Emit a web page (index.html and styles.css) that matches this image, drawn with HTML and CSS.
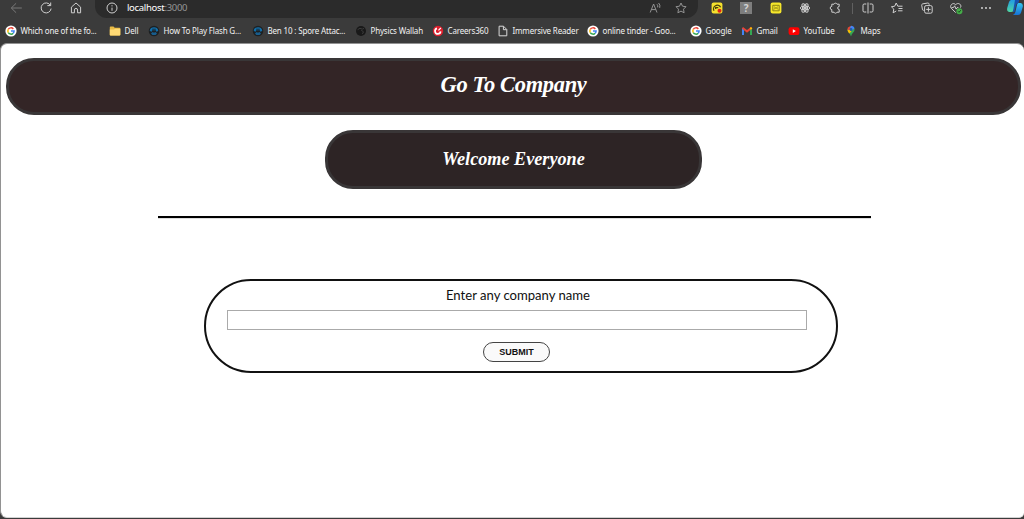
FILE: index.html
```html
<!DOCTYPE html>
<html lang="en">

<head>
  <meta charset="UTF-8" />
  <meta name="viewport" content="width=device-width, initial-scale=1.0" />
  <title>Go To Company</title>
  <link rel="stylesheet" href="styles.css">
</head>

<body>
  <!-- shared shapes -->
  <svg class="defs" width="0" height="0">
    <symbol id="google" viewBox="0 0 12 12">
      <circle cx="6" cy="6" r="5.6" fill="#fff" />
      <g fill="none" stroke-width="1.5">
        <path d="M3.3 4.4A3.1 3.1 0 0 1 8.3 3.9" stroke="#ea4335" />
        <path d="M3.3 7.6A3.1 3.1 0 0 1 3.3 4.4" stroke="#fbbc05" />
        <path d="M8.2 8.2A3.1 3.1 0 0 1 3.3 7.6" stroke="#34a853" />
        <path d="M6 6.1H9.1A3.1 3.1 0 0 1 8.2 8.2" stroke="#4285f4" />
      </g>
    </symbol>
    <symbol id="omnitrix" viewBox="0 0 12 12">
      <circle cx="6" cy="6" r="5.3" fill="#1d2022" />
      <path d="M1.7 5.6C2 1 10 1 10.3 5.6L8.7 7 7.8 5.2H4.2L3.3 7z" fill="#126fab" />
      <path d="M3 8.5 4.6 6.9 6 7.7 7.4 6.9 9 8.5 7.6 9.9H4.4z" fill="#175d8d" />
      <path d="M4.2 4.2H7.8" stroke="#172a36" />
    </symbol>
  </svg>

  <header class="browser">
    <div class="toolbar">
      <div class="nav">
        <svg viewBox="0 0 14 14" class="dim"><path d="M12.8 7H2.3M7.1 2.3 2.3 7 7.1 11.7" /></svg>
        <svg viewBox="0 0 14 14"><path d="M11.4 4.3A5 5 0 1 0 12.1 7.6M11.7 1.5V4.6H8.4" /></svg>
        <svg viewBox="0 0 14 14"><path d="M2.4 6.1 7 2 11.6 6.1V11.8H8.6V9A1.6 1.6 0 0 0 5.4 9V11.8H2.4Z" /></svg>
      </div>
      <div class="address">
        <svg viewBox="0 0 14 14"><circle cx="7" cy="7" r="5" /><path d="M7 6.6V9.8M7 4.2V5.4" /></svg>
        <p class="url">localhost<span>:3000</span></p>
        <svg viewBox="0 0 14 14" class="read"><path d="M2.2 11.5 5.6 3 9 11.5M3.4 8.6H7.8M9 3.3Q10.2 4.6 9.7 6.4M10.6 2Q12.6 4 11.7 6.8" /></svg>
        <svg viewBox="0 0 14 14" class="fav"><path d="M7 2 8.5 5.2 12 5.7 9.5 8.2 10.1 11.8 7 10.1 3.9 11.8 4.5 8.2 2 5.7 5.5 5.2Z" /></svg>
      </div>
      <div class="extensions">
        <svg viewBox="0 0 14 14"><rect x="1.6" y="1.6" width="10.8" height="11" rx="2" fill="#f6e12d" stroke="none" /><path d="M4 9.8A3.5 3.5 0 1 1 10.6 6.2M5.7 8V6.7H8.3" stroke="#4a430c" stroke-width="1.3" /><circle cx="9.5" cy="9.7" r="2" fill="#e12618" stroke="none" /></svg>
        <div class="unknown">?</div>
        <svg viewBox="0 0 14 14"><rect x="1.6" y="1.6" width="10.8" height="11" rx="2" fill="#f6e72b" stroke="none" /><path d="M3.8 4.3H10.2V9.8H3.8ZM5.2 5.8 7 7.3 8.8 5.8M5 8.5 6.2 7.1M9 8.5 7.8 7.1" stroke="#746b12" stroke-width=".8" /></svg>
        <svg viewBox="0 0 14 14"><g stroke-width="1"><ellipse cx="7" cy="7" rx="4.8" ry="2" /><ellipse cx="7" cy="7" rx="4.8" ry="2" transform="rotate(60 7 7)" /><ellipse cx="7" cy="7" rx="4.8" ry="2" transform="rotate(120 7 7)" /></g><circle cx="7" cy="7" r="1" fill="#ddd" /></svg>
        <svg viewBox="0 0 14 14"><path d="M3.8 3.2H6A1.6 1.6 0 0 1 9 3.2H11.2V5.5A1.5 1.5 0 1 0 11.2 8.5V11.2H9A1.6 1.6 0 0 1 6 11.2H3.8V8.6A1.6 1.6 0 0 1 3.8 5.4Z" /></svg>
      </div>
      <div class="divider"></div>
      <div class="tools">
        <svg viewBox="0 0 14 14"><path d="M5.3 3H3.2Q2 3 2 4.2V9.8Q2 11 3.2 11H5.3M8.7 3H10.8Q12 3 12 4.2V9.8Q12 11 10.8 11H8.7M7 1.5V12.5" /></svg>
        <svg viewBox="0 0 14 14"><path d="M7.8 5.2 6.2 2 4.7 5.2 1.4 5.8 3.8 8.1 3.1 11.8 6.2 10M7.8 5.2H12.5M8.5 7.5H12.5M8 9.8H12.5" /></svg>
        <svg viewBox="0 0 14 14"><path d="M3.8 9.4 2.5 8.8 1.7 4.2Q1.6 3.2 2.6 2.9L7.8 2Q8.8 1.9 9 2.9L9.2 3.8" /><rect x="4.6" y="4.6" width="7.6" height="7.6" rx="1.5" /><path d="M8.4 6.2V10.6M6.2 8.4H10.6" /></svg>
        <svg viewBox="0 0 14 14"><path d="M6.7 11.6 2.2 7.2C.2 4.8 3.8 .6 6.7 3.7 9.6 .6 13.2 4.3 11.4 6.6M2.5 6.6H4.5L5.6 4.8 7.1 8.1 8.1 6.6H9.4" /><circle cx="10.4" cy="10.2" r="3" fill="#45ad49" stroke="none" /><path d="M9 10.3 10 11.3 11.8 9.2" stroke="#174b1a" /></svg>
        <svg viewBox="0 0 14 14"><g fill="#e2e2e2" stroke="none"><circle cx="3" cy="7" r=".9" /><circle cx="7" cy="7" r=".9" /><circle cx="11" cy="7" r=".9" /></g></svg>
      </div>
      <svg class="copilot" viewBox="0 0 18 16">
        <defs>
          <linearGradient id="left" x2="0" y2="1"><stop stop-color="#229ce3" /><stop offset="1" stop-color="#4fd7a1" /></linearGradient>
          <linearGradient id="right" x2="0" y2="1"><stop stop-color="#36c6ef" /><stop offset="1" stop-color="#1672d6" /></linearGradient>
        </defs>
        <path d="M5 0H11L7.5 10.5Q6.8 12 5 12H3.2Q.5 11.5 1.2 8L3 2Q3.5 .3 5 0Z" fill="url(#left)" />
        <path d="M12 3H14.5Q17.5 3.5 16.7 7L15 12.8Q14.2 15 12 15H6.8Q8.7 14.6 9.3 12.3L11 5Q11.3 3.5 12 3Z" fill="url(#right)" />
        <path d="M9 0H13.2L12.5 3Q10.6 3 10 5.8L8.4 12H6.9Z" fill="#1752b1" />
      </svg>
    </div>

    <nav class="bookmarks">
      <a><svg><use href="#google" /></svg>Which one of the fo...</a>
      <a><svg viewBox="0 0 12 12"><path d="M.8 2.2Q.8 1.4 1.6 1.4H4.5L5.7 2.7H10.5Q11.3 2.7 11.3 3.5V9.8Q11.3 10.6 10.5 10.6H1.6Q.8 10.6.8 9.8Z" fill="#e9bb45" /><path d="M.8 4.6H5L6.2 3.7H11.3V9.8Q11.3 10.6 10.5 10.6H1.6Q.8 10.6.8 9.8Z" fill="#ffda75" /></svg>Dell</a>
      <a><svg><use href="#omnitrix" /></svg>How To Play Flash G...</a>
      <a><svg><use href="#omnitrix" /></svg>Ben 10 : Spore Attac...</a>
      <a><svg viewBox="0 0 12 12"><circle cx="6" cy="6" r="5" fill="#191919" /><path d="M2.6 4.7 5 3.3 7.3 4.1 9 3.4M6.2 5.2 8.5 6.8 7.4 9" fill="none" stroke="#3c3c3c" /></svg>Physics Wallah</a>
      <a><svg viewBox="0 0 12 12"><circle cx="6" cy="6" r="5.2" fill="#df1f2d" /><path d="M5 3.4A2.8 2.8 0 1 0 8.6 6.4" fill="none" stroke="#fff" stroke-width="1.7" /><path d="M6.4 5.4 8.8 3" stroke="#fff" stroke-width="1.2" /></svg>Careers360</a>
      <a><svg viewBox="0 0 12 12"><path d="M2.1 1.2H6.5L9.8 4.5V10.8H2.1ZM6.4 1.4V4.7H9.6" fill="none" stroke="#d9d9d9" /></svg>Immersive Reader</a>
      <a><svg><use href="#google" /></svg>online tinder - Goo...</a>
      <a><svg><use href="#google" /></svg>Google</a>
      <a><svg viewBox="0 0 12 12" fill="none" stroke-width="2"><path d="M2 3V10" stroke="#4285f4" /><path d="M10 3V10" stroke="#34a853" /><path d="M1.4 2.8 6 6.4 10.6 2.8" stroke="#ea4335" /><path d="M9.2 3.9 10.8 2.7" stroke="#fbbc04" /></svg>Gmail</a>
      <a><svg viewBox="0 0 12 12"><rect x=".6" y="2.2" width="10.8" height="7.8" rx="2" fill="#f00" /><path d="M4.8 4.3V7.9L7.9 6.1Z" fill="#fff" /></svg>YouTube</a>
      <a><svg viewBox="0 0 12 12"><path d="M2.4 4.5A3.7 3.7 0 0 1 9.6 4.5Q9.6 6.2 8 7.8 6.7 9.2 6 11.4 5.3 9.3 3.7 7.6 2.4 6 2.4 4.5Z" fill="#34a853" /><path d="M3.2 2.4Q4.5 .9 6.2 .9L4.6 5.8 2.5 5.3Q2.2 3.8 3.2 2.4Z" fill="#ea4335" /><path d="M6 .8Q8.9 .8 9.5 3.6L7.3 5 5 2.9Z" fill="#4285f4" /><path d="M2.5 5.3 4.6 4.7 6.5 6.3 4.4 8.5Q2.8 7 2.5 5.3Z" fill="#fbbc04" /><circle cx="6" cy="4.5" r="1.4" fill="#2459a9" /></svg>Maps</a>
    </nav>
  </header>

  <main>
    <h1 class="heading">Go To Company</h1>
    <h2 class="welcome">Welcome Everyone</h2>
    <hr>
    <form class="company-form">
      <label for="company">Enter any company name</label>
      <input type="text" id="company">
      <button type="button" id="submit-btn">SUBMIT</button>
    </form>
  </main>
</body>

</html>
```

FILE: styles.css
```css
* {
  margin: 0;
  padding: 0;
  box-sizing: border-box;
}

body {
  height: 519px;
  overflow: hidden;
  background-color: #3b3b3b;
  font-family: "Noto Sans", "Open Sans", sans-serif;
}

.defs {
  display: block;
}

/* Browser bar */
.browser {
  height: 43px;
  color: #f2f2f2;
}

.toolbar {
  height: 18px;
  display: flex;
  align-items: flex-start;
}

.toolbar svg {
  width: 14px;
  height: 14px;
  margin-top: 1px;
  flex-shrink: 0;
  fill: none;
  stroke: #d0d0d0;
  stroke-width: 1;
}

.toolbar .dim {
  stroke: #797979;
}

.nav {
  width: 95px;
  display: flex;
  gap: 16px;
  padding-left: 9px;
}

.address {
  width: 603px;
  height: 18px;
  display: flex;
  padding-left: 10px;
  border-radius: 0 0 12px 12px;
  background-color: #2b2b2b;
}

.url {
  margin-left: 8px;
  font-size: 9.5px;
  letter-spacing: -0.3px;
  line-height: 16px;
  color: #fff;
}

.url span {
  color: #969696;
}

.address .read {
  margin-left: auto;
  stroke: #939393;
}

.address .fav {
  margin: 1px 10px 0 12px;
  stroke: #939393;
}

.extensions {
  display: flex;
  gap: 15.6px;
  margin-left: 12px;
}

.unknown {
  width: 12px;
  height: 12px;
  margin: 2px 1px 0;
  background-color: #7e7e7e;
  color: #d2d2d2;
  font-size: 10px;
  font-weight: bold;
  line-height: 12px;
  text-align: center;
}

.divider {
  width: 1px;
  height: 11px;
  margin: 3px 8px 0 9.6px;
  background-color: #606060;
}

.tools {
  display: flex;
  gap: 15.6px;
}

.toolbar .copilot {
  width: 18px;
  height: 16px;
  margin: 0 0 0 13px;
  stroke: none;
}

.bookmarks {
  height: 25px;
  display: grid;
  grid-template-columns: 104px 39px 104px 103px 77px 65px 90px 103px 51px 47px 57px 60px;
  align-items: center;
  padding-left: 5px;
}

.bookmarks a {
  display: flex;
  align-items: center;
  gap: 3.5px;
  font-size: 8px;
  letter-spacing: -0.17px;
  line-height: 12px;
  white-space: nowrap;
}

.bookmarks svg {
  width: 12px;
  height: 12px;
  flex-shrink: 0;
}

/* Page */
main {
  height: 475px;
  padding: 14px 2px 0 5px;
  overflow: hidden;
  border: 1px solid #929292;
  border-right: none;
  border-bottom-color: #d2d2d2;
  border-radius: 7px 7px 5px 7px;
  background-color: #fff;
}

.heading {
  width: 1015px;
  height: 57px;
  border: 3px solid #393637;
  border-radius: 28px;
  background-color: #332526;
  color: #fff;
  font-family: "Liberation Serif", serif;
  font-size: 22.5px;
  font-style: italic;
  letter-spacing: -0.35px;
  line-height: 48px;
  text-align: center;
}

.welcome {
  width: 377px;
  height: 59px;
  margin: 15px 0 0 319px;
  border: 3px solid #393637;
  border-radius: 28px;
  background-color: #2d2425;
  color: #fff;
  font-family: "Liberation Serif", serif;
  font-size: 18.2px;
  font-style: italic;
  line-height: 53px;
  text-align: center;
}

hr {
  width: 713px;
  margin: 27px 0 0 152px;
  border: none;
  border-top: 2px solid #000;
  border-bottom: 1px solid #ddd;
}

.company-form {
  width: 634px;
  height: 94px;
  display: flex;
  flex-direction: column;
  align-items: center;
  margin: 60px 0 0 198px;
  padding-right: 8px;
  border: 2px solid #111;
  border-radius: 48px;
}

.company-form label {
  margin: 4px 0 0 2px;
  color: #111;
  font-family: "Gill Sans", Lato, sans-serif;
  font-size: 13.1px;
  line-height: 20px;
}

#company {
  width: 580px;
  height: 20px;
  margin-top: 5px;
  border: 1px solid #aaa;
}

#submit-btn {
  width: 67px;
  height: 20px;
  margin: 12px 1px 0 0;
  border: 1px solid #444;
  border-radius: 11px;
  background-color: #fafafa;
  color: #111;
  font-family: "Liberation Sans", sans-serif;
  font-size: 9px;
  font-weight: bold;
}
```
